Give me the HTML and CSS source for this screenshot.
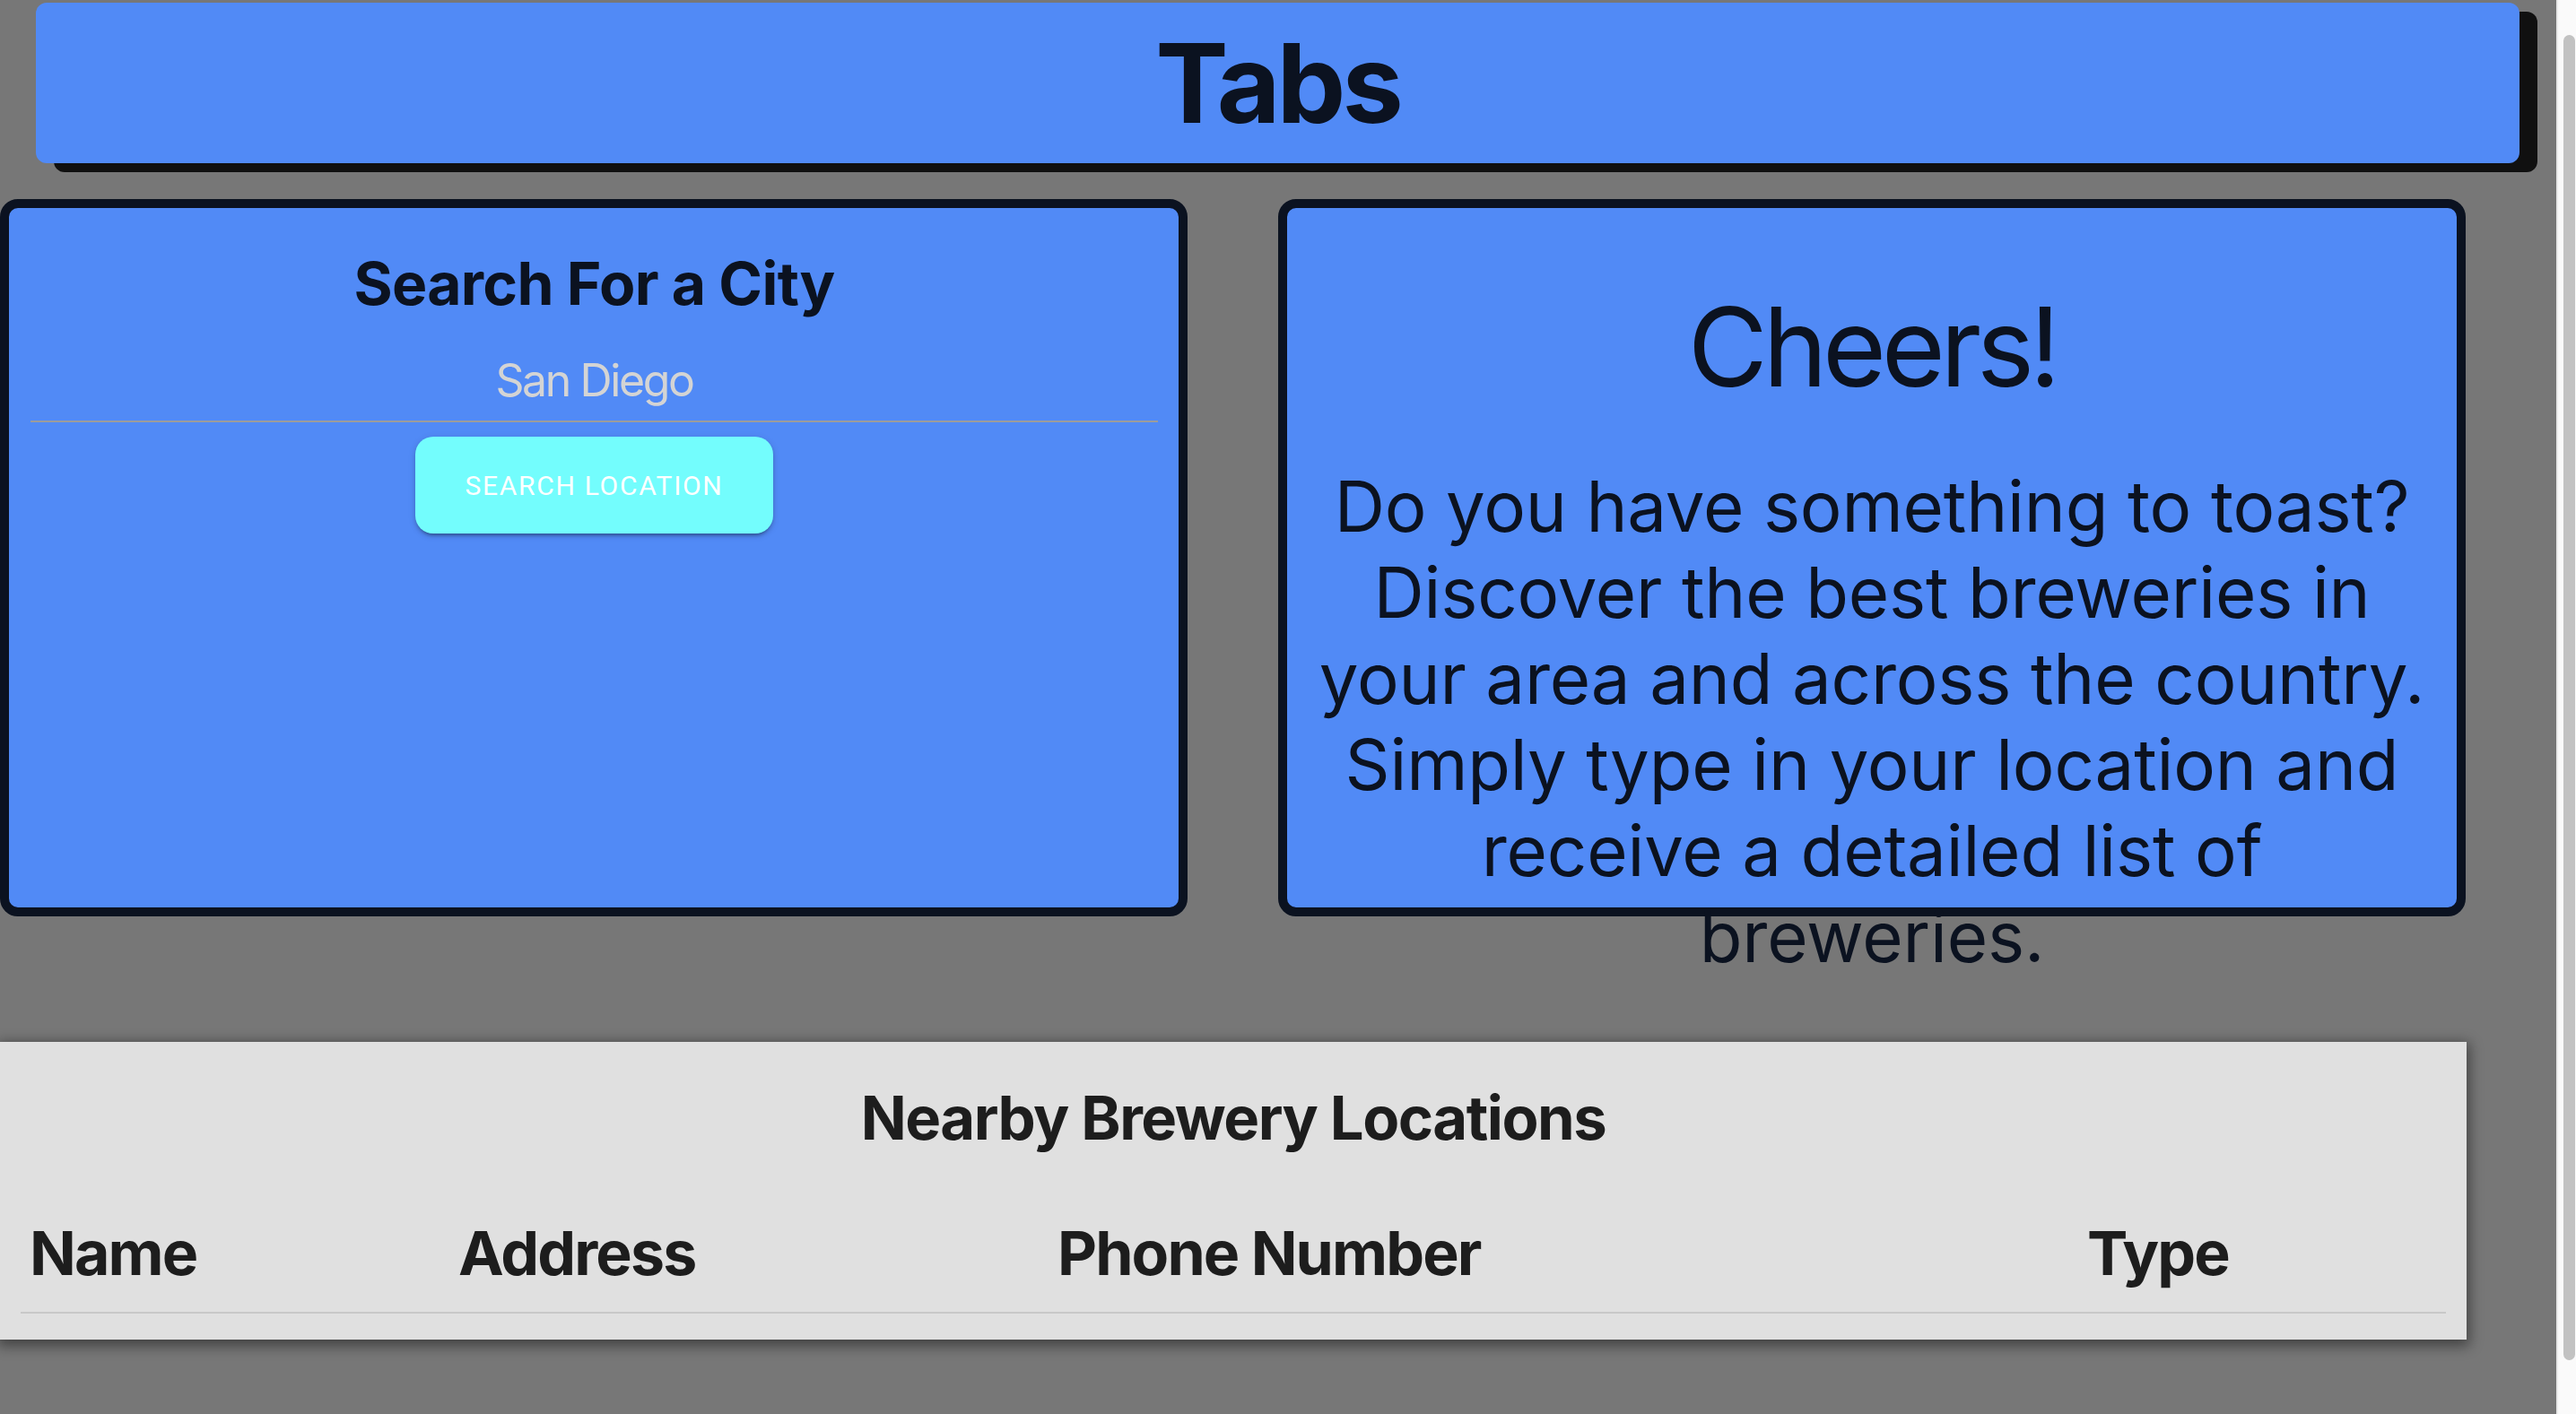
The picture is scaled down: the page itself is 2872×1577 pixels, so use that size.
FILE: index.html
```html
<!DOCTYPE html>
<html lang="en">
<head>
  <meta charset="UTF-8" />
  <meta name="viewport" content="width=device-width, initial-scale=1.0" />
  <title>Brewery Finder</title>
  <link rel="stylesheet" href="styles.css">
</head>
<body>
  <div class="page">
    <header class="tabs">
      <h1>Tabs</h1>
    </header>

    <main class="cards">
      <section class="card search-card">
        <h2>Search For a City</h2>
        <input type="text" class="city-input" placeholder="San Diego" />
        <button type="button" class="search-btn">Search Location</button>
      </section>

      <section class="card info-card">
        <h2>Cheers!</h2>
        <p>Do you have something to toast? Discover the best breweries in your area and across the country. Simply type in your location and receive a detailed list of breweries.</p>
      </section>
    </main>

    <section class="results">
      <h3>Nearby Brewery Locations</h3>
      <table>
        <thead>
          <tr>
            <th class="col-name">Name</th>
            <th class="col-address">Address</th>
            <th class="col-phone">Phone Number</th>
            <th>Type</th>
          </tr>
        </thead>
        <tbody></tbody>
      </table>
    </section>
  </div>

  <div class="scroll-track">
    <div class="scroll-thumb"></div>
  </div>
</body>
</html>
```

FILE: styles.css
```css
body {
  margin: 0;
  padding: 0;
  display: flex;
  height: 100vh;
  overflow: hidden;
  background-color: #777777;
  font-family: Inter, "Noto Sans", sans-serif;
  color: #0b1220;
}

.page {
  flex: 1;
  min-width: 0;
  padding-top: 3px;
}

/* fake window scrollbar on the right */
.scroll-track {
  width: 20px;
  flex-shrink: 0;
  border-left: 2px solid #e9e9e9;
  background-color: #fafafa;
}

.scroll-thumb {
  width: 13px;
  height: 1478px;
  margin: 39px 0 0 6px;
  border-radius: 8px;
  background-color: #c2c2c2;
}

/* top bar */
.tabs {
  height: 179px;
  margin: 0 41px 0 40px;
  display: flex;
  align-items: center;
  justify-content: center;
  background-color: #518af6;
  border-radius: 12px;
  box-shadow: 20px 10px 0 #101010;
}

.tabs h1 {
  margin: 0;
  font-size: 122px;
  line-height: 1;
  font-weight: 700;
  letter-spacing: -4px;
}

/* two cards */
.cards {
  display: grid;
  grid-template-columns: 1fr 1fr;
  margin-top: 40px;
}

.card {
  height: 800px;
  margin-right: 101px;
  box-sizing: border-box;
  border: 10px solid #0b1220;
  border-radius: 20px;
  background-color: #518af6;
  text-align: center;
}

.search-card {
  padding: 44px 23px 0 24px;
}

.search-card h2 {
  margin: 0;
  font-size: 66px;
  line-height: 80px;
  font-weight: 700;
  letter-spacing: -0.7px;
}

.city-input {
  display: block;
  width: 100%;
  box-sizing: border-box;
  margin-top: 38px;
  padding: 0 0 15px;
  border: none;
  border-bottom: 2px solid #9c9c9c;
  background: transparent;
  font-family: Inter, "Noto Sans", sans-serif;
  font-size: 50px;
  line-height: 60px;
  height: 77px;
  text-align: center;
  letter-spacing: -2.4px;
  outline: none;
}

.city-input::placeholder {
  color: #d4d4d4;
  opacity: 1;
}

.search-btn {
  display: block;
  width: 399px;
  height: 108px;
  margin: 16px auto 0;
  border: none;
  border-radius: 20px;
  background-color: #73fdfd;
  color: #fff;
  font-family: Roboto, sans-serif;
  font-size: 30px;
  font-weight: 400;
  letter-spacing: 1.7px;
  text-transform: uppercase;
  box-shadow: 0 5px 3px -3px rgba(0, 0, 0, 0.2), 0 3px 4px 0 rgba(0, 0, 0, 0.14), 0 2px 9px 0 rgba(0, 0, 0, 0.12);
  cursor: pointer;
}

.info-card {
  padding: 82px 25px 0;
}

.info-card h2 {
  margin: 0;
  font-size: 122px;
  line-height: 146px;
  font-weight: 400;
  letter-spacing: -5.5px;
}

.info-card p {
  margin: 57px 0 0;
  font-size: 78px;
  line-height: 96px;
  letter-spacing: -0.2px;
}

/* results table */
.results {
  width: calc(100% - 100px);
  margin-top: 140px;
  padding: 45px 23px 29px;
  box-sizing: border-box;
  background-color: #e0e0e0;
  color: #1d1d1d;
  box-shadow: 0 4px 14px 3px rgba(0, 0, 0, 0.45);
}

.results h3 {
  margin: 0;
  text-align: center;
  font-size: 67px;
  line-height: 80px;
  font-weight: 700;
  letter-spacing: -1.5px;
}

table {
  width: 100%;
  margin-top: 70px;
  border-collapse: collapse;
}

th {
  padding: 0 12px 26px 10px;
  text-align: left;
  font-size: 68px;
  line-height: 80px;
  font-weight: 700;
  letter-spacing: -1.9px;
  border-bottom: 2px solid #c8c8c8;
}

.col-name {
  width: 456px;
}

.col-address {
  width: 646px;
}

.col-phone {
  width: 1126px;
}
```
